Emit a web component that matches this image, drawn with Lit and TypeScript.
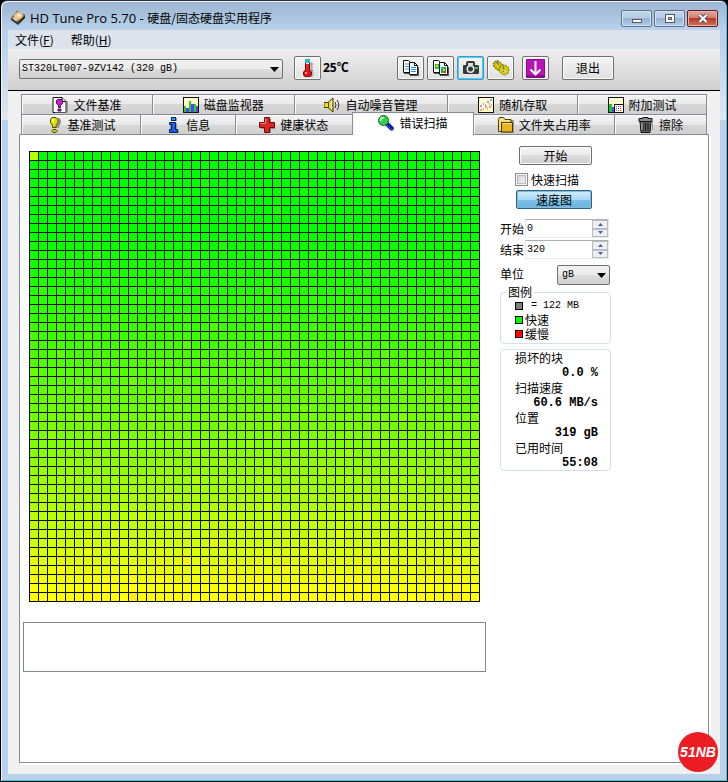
import { LitElement, html, css, svg, TemplateResult } from "lit";
import { customElement, state } from "lit/decorators.js";
import { classMap } from "lit/directives/class-map.js";

const GRID = 50;

// Red channel of a row's colour, as [row, value] knots; green stays at full.
const KNOTS: [number, number][] = [
  [0, 0], [8, 2], [14, 28], [21, 66], [30, 116], [36, 152], [42, 200], [48, 250], [49, 255],
];

function redAt(row: number): number {
  for (let i = 1; i < KNOTS.length; i++) {
    const [r0, v0] = KNOTS[i - 1];
    const [r1, v1] = KNOTS[i];
    if (row <= r1) return v0 + ((v1 - v0) * (row - r0)) / (r1 - r0);
  }
  return 255;
}

function cellColor(index: number): string {
  if (index === 0) return "rgb(180,255,0)";
  const row = Math.floor(index / GRID);
  const jitter = (index * 7919) % 97;
  const extra = jitter < 3 ? 18 : jitter < 20 ? 5 : 0;
  const red = Math.min(255, Math.round(redAt(row) + extra));
  const green = row > 48 && jitter < 4 ? 240 : 255;
  return `rgb(${red},${green},0)`;
}

const CELLS = Array.from({ length: GRID * GRID }, (_, i) => cellColor(i));

const icon = (body: TemplateResult, size = 16) => html`
  <svg class="icon" width=${size} height=${size} viewBox="0 0 ${size} ${size}" aria-hidden="true">${body}</svg>`;

const icons = {
  app: icon(svg`
    <path d="M1 8 L7 1 L15 5 L15 8 L8 15 L1 10Z" fill="#3a3632"/>
    <path d="M1 8 L7 1 L15 5 L8 12Z" fill="#8d7a66"/>
    <ellipse cx="8.500" cy="6" rx="4.500" ry="3.500" fill="#f3c784" transform="rotate(-25 8 6)"/>
    <circle cx="9" cy="5.500" r="1.300" fill="#fff"/>
    <path d="M3 8 L7 11" stroke="#e8dccb" stroke-width="1.500"/>
    <path d="M9 13 L15 7" stroke="#15130f"/>`),
  thermo: icon(svg`
    <path d="M12 3v8l2 2v3l-2 2H8" fill="none" stroke="#999"/>
    <path d="M6 0h5v11l2 2v3l-2 2H6l-2-2v-3l2-2z" fill="#701010"/>
    <rect x="7" y="1" width="3" height="6" fill="#fff"/>
    <rect x="6" y="0" width="5" height="4" fill="#32b4c8"/>
    <rect x="7" y="5" width="3" height="9" fill="#f02020"/>
    <ellipse cx="8.500" cy="14.500" rx="3.500" ry="3" fill="#e81010"/>
    <rect x="6" y="13" width="2" height="2" fill="#ff9a9a"/>
    <path d="M12 5h2M12 8h2M12 11h2" stroke="#777"/>`, 18),
  copyText: icon(svg`
    <path d="M1.500 1.500h5l3 3v9h-8z" fill="#fff" stroke="#111"/>
    <path d="M3 5h5M3 7.500h5M3 10h5" stroke="#2f91ec"/>
    <path d="M7.500 3.500h5l3 3v9h-8z" fill="#fff" stroke="#111"/>
    <path d="M12.500 3.500v3h3" fill="none" stroke="#111"/>
    <path d="M9 8.500h5M9 10.500h5M9 12.500h5" stroke="#2f91ec"/>
    <path d="M2 14.500h5M8 16.500h8.500V8" fill="none" stroke="#555"/>`, 18),
  copyImage: icon(svg`
    <path d="M1.500 1.500h5l3 3v9h-8z" fill="#fff" stroke="#111"/>
    <path d="M3 5h4v5H3z" fill="#16c23a"/><path d="M4 6h2v2H4z" fill="#ffd824"/>
    <path d="M7.500 3.500h5l3 3v9h-8z" fill="#fff" stroke="#111"/>
    <path d="M12.500 3.500v3h3" fill="none" stroke="#111"/>
    <path d="M9 8h5v6H9z" fill="#12b436"/><path d="M9 8h3v2H9z" fill="#29a8e8"/>
    <path d="M11 10h2v2h-2z" fill="#ffca1a"/><path d="M12 12h2v2h-2z" fill="#e52a1b"/>
    <path d="M2 14.500h5M8 16.500h8.500V8" fill="none" stroke="#555"/>`, 18),
  camera: icon(svg`
    <path d="M4 6V4q0-2 2-2h5q2 0 2 2v2h2q2 0 2 1v7q0 1-1 1H2q-1 0-1-1V7q0-1 1-1z" fill="#35383b"/>
    <path d="M6 4h5v2H6z" fill="#dfe6ea"/>
    <circle cx="8.500" cy="10" r="4" fill="#eceff1"/>
    <circle cx="8.500" cy="10" r="2.500" fill="#35383b"/>
    <path d="M13 8h3v2h-3z" fill="#2ecb3d"/>`, 18),
  gears: icon(svg`
    <path d="M3 2l2 1 1-1 2 1 2 2 1 4-2 2-4 0-3-3-1-3z" fill="#c4bd00" stroke="#6e6900" stroke-dasharray="2 1"/>
    <path d="M8 8l2-2 3 0 3 2 1 3-1 3-3 2-3-1-3-3z" fill="#d6cf10" stroke="#6e6900" stroke-dasharray="2 1"/>
    <path d="M5.500 1v6M11.500 7v6" stroke="#777" stroke-width="1.500"/>
    <path d="M4 5l3 3M10 10l4 3" stroke="#fff04a"/>`, 18),
  down: icon(svg`
    <rect x="0" y="0" width="19" height="19" rx="1" fill="#8a0b8a"/>
    <rect x="1" y="1" width="17" height="15" fill="#b814b8"/>
    <path d="M9.500 2v14M4.500 10.500l5 5 5-5" fill="none" stroke="#fff" stroke-width="2"/>`, 19),
  fileBench: icon(svg`
    <path d="M1 .5h9l4 4v11H1z" fill="#fff" stroke="#111"/>
    <path d="M10 .5v4h4" fill="#ddd" stroke="#111"/>
    <path d="M15.500 4v12H3" fill="none" stroke="#999"/>
    <path d="M5.500 2.500h4l1 1v3l-2 2v2h-2v-2l-2-2v-3z" fill="#d116d1" stroke="#50104f"/>
    <path d="M6 12h3v2H6z" fill="#d116d1" stroke="#50104f"/>`),
  monitor: icon(svg`
    <rect x=".5" y=".5" width="15" height="15" fill="#fffcc9" stroke="#111"/>
    <path d="M1 9h2v6H1zM6 4h2v11H6zM11 7h2v8h-2z" fill="#2acb35"/>
    <path d="M3 11h3v4H3zM8 7h3v8H8zM13 9h2v6h-2z" fill="#5547e8"/>`),
  speaker: icon(svg`
    <path d="M0 5.500h4l5-4.500v14l-5-4.500H0z" fill="#f2df15" stroke="#3d3700"/>
    <path d="M4.500 5.500v5" stroke="#3d3700"/><path d="M7.500 4v8" stroke="#fff"/>
    <path d="M11 5q2 3 0 6M13 3q3.500 5 0 10" fill="none" stroke="#333"/>`),
  scatter: icon(svg`
    <rect x=".5" y=".5" width="15" height="15" fill="#fff9cf" stroke="#111"/>
    <path d="M2 9h2M5 7h1M7 8h1M9 5h2M12 3h2M11 7h1" stroke="#3447e8"/>
    <path d="M2 13h2M5 12h1M7 10h2M9 12h1M11 10h2M13 8h1" stroke="#ee3a2a"/>`),
  extra: icon(svg`
    <rect x=".5" y=".5" width="15" height="15" fill="#fff9cf" stroke="#111"/>
    <path d="M1 7h3v8H1z" fill="#18c532"/><path d="M4 10h3v5H4z" fill="#4856e8"/>
    <rect x="6.500" y="7.500" width="9" height="8" fill="#fff" stroke="#111"/>
    <path d="M8 9.500h6M8 11.500h6M8 13.500h6" stroke="#e53a3a" stroke-dasharray="1 1"/>`),
  bulb: icon(svg`
    <path d="M9 1h4l2 2v3l-2 4v1H9z" fill="#999"/>
    <path d="M6 .5h4l2 2v3l-2 3v2H6.500v-2L4.500 5.500v-3z" fill="#e2e000" stroke="#4b4a00"/>
    <path d="M6 2h2v3H6z" fill="#fffd9a"/>
    <path d="M7 12.500h3l1 1v1l-1 1H7l-1-1v-1z" fill="#cfcc00" stroke="#4b4a00"/>`),
  info: icon(svg`
    <path d="M7 1h5v3H7zM5 6h7v7h2v3H5z" fill="#999"/>
    <rect x="6.500" y=".5" width="4" height="3" fill="#22a6f2" stroke="#062a58"/>
    <path d="M4.500 5.500h6v7h2v3h-8v-3h2v-5h-2z" fill="#1660ee" stroke="#06205a"/>`),
  health: icon(svg`
    <path d="M6 2h6v4h4v6h-4v4H6v-4H2V6h4z" fill="#8a8a8a"/>
    <path d="M5.500 .5h5v5h5v5h-5v5h-5v-5h-5v-5h5z" fill="#e02222" stroke="#621010"/>
    <path d="M6.500 6.500v-5M1.500 6.500h5" stroke="#ff8a80"/>`),
  scan: icon(svg`
    <path d="M9 8l7 7" stroke="#999" stroke-width="4"/>
    <path d="M8 8l6.500 6.500" stroke="#0b1a9c" stroke-width="4"/>
    <path d="M8 9l6 6" stroke="#3f59ee"/>
    <circle cx="5.500" cy="5.500" r="5" fill="#35d04a" stroke="#126c22"/>
    <path d="M3 6V3h3" fill="none" stroke="#c8ffcf" stroke-width="1.500"/>`),
  folder: icon(svg`
    <path d="M3 3h13v13H3z" fill="#999"/>
    <path d="M.5 2.500l1-2h4l1.500 2h6v12H.5z" fill="#f7e07a" stroke="#493800"/>
    <path d="M3.500 5.500h11v9.500h-11z" fill="#e9b420" stroke="#493800"/>
    <path d="M4.500 6.500h9" stroke="#ffe894"/>`),
  trash: icon(svg`
    <path d="M1 1.500h4v-1h5v1h4v3H1z" fill="#8c8c8c" stroke="#111"/>
    <path d="M2 4.500h11l-1 11H3z" fill="#5e5e5e" stroke="#111"/>
    <path d="M5 6v8M7.500 6v8M10 6v8" stroke="#161616"/>
    <path d="M4 6v7" stroke="#c9c9c9"/><path d="M14.500 4v9" stroke="#999"/>`),
};

interface Tab { id: string; label: string; grow: number; icon: TemplateResult; }

const BACK_TABS: Tab[] = [
  { id: "file", label: "文件基准", grow: 131, icon: icons.fileBench },
  { id: "monitor", label: "磁盘监视器", grow: 142, icon: icons.monitor },
  { id: "noise", label: "自动噪音管理", grow: 154, icon: icons.speaker },
  { id: "random", label: "随机存取", grow: 130, icon: icons.scatter },
  { id: "extra", label: "附加测试", grow: 129, icon: icons.extra },
];
const FRONT_TABS: Tab[] = [
  { id: "bench", label: "基准测试", grow: 119, icon: icons.bulb },
  { id: "info", label: "信息", grow: 95, icon: icons.info },
  { id: "health", label: "健康状态", grow: 117, icon: icons.health },
  { id: "scan", label: "错误扫描", grow: 122, icon: icons.scan },
  { id: "folder", label: "文件夹占用率", grow: 141, icon: icons.folder },
  { id: "erase", label: "擦除", grow: 92, icon: icons.trash },
];

const base = css`
  * { box-sizing: border-box; }
  button, input, select, textarea { font: inherit; color: inherit; margin: 0; border-radius: 0; }
  .icon { display: block; flex: none; }
`;

@customElement("block-map")
export class BlockMap extends LitElement {
  static styles = css`
    :host { display: block; }
    .map {
      display: inline-grid;
      grid-template-columns: repeat(50, 8px);
      grid-auto-rows: 8px;
      gap: 1px;
      padding: 1px;
      background: #000;
      vertical-align: top;
    }
  `;
  render() {
    return html`<div class="map" role="img" aria-label="速度图">
      ${CELLS.map((c) => html`<i style="background:${c}"></i>`)}
    </div>`;
  }
}

@customElement("scan-controls")
export class ScanControls extends LitElement {
  static styles = [base, css`
    :host { display: flex; flex-direction: column; width: 111px; }
    .push {
      height: 19px; padding: 0; line-height: 16px;
      border: 1px solid #707070; border-radius: 2px;
      background: linear-gradient(#f4f4f4, #ebebeb 50%, #dddddd 50%, #cfcfcf);
      box-shadow: inset 0 0 0 1px #fafafa;
    }
    .start { margin: 0 19px; }
    .check { display: flex; align-items: center; gap: 3px; margin: 6px 0 2px 15px; height: 17px; }
    .check input {
      appearance: none; width: 13px; height: 13px;
      border: 1px solid #8e8f8f; background: linear-gradient(135deg, #cbcfd5, #f6f6f6);
      box-shadow: inset 0 0 0 1px #f4f4f4, inset 0 0 0 2px #b8bcc4;
    }
    .on {
      margin: 0 19px 0 16px; border-color: #2c628b;
      background: linear-gradient(#d2ecfa, #a9daf4 50%, #7cc0ea 50%, #68b3db);
      box-shadow: inset 0 0 0 1px #86b8d4;
    }
    .field { display: flex; align-items: center; height: 19px; gap: 1px; }
    .field label { width: 24px; flex: none; white-space: nowrap; }
    .from { margin-top: 10px; }
    .to { margin-top: 2px; }
    .spin { display: flex; width: 84px; height: 19px; border: 1px solid #e3e9ef; border-top-color: #abadb3; background: #fff; }
    .spin input { width: 64px; border: 0; padding: 0 1px; background: none; font: 10px/16px "Liberation Mono", monospace; outline: 0; }
    .arrows { display: flex; flex-direction: column; width: 16px; margin-left: auto; }
    .arrows button {
      flex: 1; min-height: 0; padding: 0; border: 1px solid #b9bcc4; background: #efefef;
      display: flex; align-items: center; justify-content: center;
    }
    .arrows svg { display: block; }
    .unit { margin: 5px 1px 1px 0; height: 20px; justify-content: space-between; }
    .pick { position: relative; width: 53px; height: 20px; }
    .pick select {
      appearance: none; width: 100%; height: 100%; padding: 0 4px; border: 1px solid #707070; border-radius: 2px;
      background: linear-gradient(#f2f2f2, #ebebeb 50%, #dddddd 50%, #cfcfcf);
      font: 10px "Liberation Mono", monospace;
    }
    .pick svg { position: absolute; right: 4px; top: 9px; pointer-events: none; }
    fieldset { margin: 0; padding: 0; border: 1px solid #d5dfe5; border-radius: 4px; min-width: 0; }
    .legend { height: 59px; }
    legend { margin-left: 5px; padding: 0 2px; line-height: 14px; }
    ul { list-style: none; margin: 0; padding: 0 0 0 14px; }
    li { display: flex; align-items: center; gap: 2px; height: 14px; line-height: 14px; }
    .mono { font: 10px/14px "Liberation Mono", monospace; white-space: pre; }
    .key { width: 8px; height: 8px; border: 1px solid #000; flex: none; }
    .grey { background: #808080; }
    .green { background: #00ff00; }
    .red { background: #ff0000; }
    .stats { margin: 5px 0 0; padding: 0 12px 0 14px; border: 1px solid #d5dfe5; border-radius: 4px; line-height: 15px; }
    .stats dt { height: 15px; }
    .stats dd { height: 15px; margin: 0; text-align: right; font: bold 12px/17px "Liberation Mono", monospace; white-space: nowrap; }
  `];

  private spinner(id: string, label: string, value: string, cls: string) {
    return html`<div class="field ${cls}">
      <label for=${id}>${label}</label>
      <span class="spin">
        <input id=${id} type="text" .value=${value}>
        <span class="arrows">
          <button aria-label="增加"><svg width="5" height="3" viewBox="0 0 5 3"><path d="M0 3L2.500 0L5 3z" fill="#3f5fb5"/></svg></button>
          <button aria-label="减少"><svg width="5" height="3" viewBox="0 0 5 3"><path d="M0 0h5L2.500 3z" fill="#3f5fb5"/></svg></button>
        </span>
      </span>
    </div>`;
  }

  render() {
    return html`
      <button class="push start">开始</button>
      <label class="check"><input type="checkbox">快速扫描</label>
      <button class="push on" aria-pressed="true">速度图</button>
      ${this.spinner("from", "开始", "0", "from")}
      ${this.spinner("to", "结束", "320", "to")}
      <div class="field unit">
        <label for="unit">单位</label>
        <span class="pick">
          <select id="unit"><option>gB</option></select>
          <svg width="9" height="5" viewBox="0 0 9 5"><path d="M0 0h9L4.500 5z"/></svg>
        </span>
      </div>
      <fieldset class="legend">
        <legend>图例</legend>
        <ul>
          <li><span class="key grey"></span><span class="mono"> = 122 MB</span></li>
          <li><span class="key green"></span>快速</li>
          <li><span class="key red"></span>缓慢</li>
        </ul>
      </fieldset>
      <dl class="stats">
        <dt>损坏的块</dt><dd>0.0 %</dd>
        <dt>扫描速度</dt><dd>60.6 MB/s</dd>
        <dt>位置</dt><dd>319 gB</dd>
        <dt>已用时间</dt><dd>55:08</dd>
      </dl>`;
  }
}

@customElement("app-root")
export class AppRoot extends LitElement {
  @state() private current = "scan";

  static styles = [base, css`
    :host {
      display: block; background: #000; color: #000;
      font: 12px/16px "Noto Sans CJK SC", sans-serif;
    }
    .window {
      position: relative; display: flex; flex-direction: column; min-height: 100vh;
      padding: 0 7px 7px; border: 1px solid #000;
      border-color: #2b2f38 #000 #000 #000;
      border-radius: 7px 7px 0 0;
      background:
        linear-gradient(#9ab5d3, #b9d1ea 29px, #b9d1ea 40px, #dce8f4 119px, #b9d1ea 119px);
      box-shadow: inset 1px 1px 0 #eef5fb, inset -1px -1px 0 #2fd0ea;
    }
    header { display: flex; align-items: center; height: 29px; padding: 5px 2px 0 2px; gap: 4px; }
    h1 { flex: 1; margin: 0; font: 13px/18px "Open Sans", sans-serif; white-space: nowrap; }
    .cjk { font: 12px/18px "Noto Sans CJK SC", sans-serif; }
    .caption { display: flex; gap: 2px; align-self: flex-start; margin-top: 4px; }
    .caption button {
      display: flex; align-items: center; justify-content: center;
      width: 31px; height: 17px; padding: 0;
      border: 1px solid #59708e; border-radius: 2px;
      background: linear-gradient(#c3d6ea, #b4cae2 50%, #98b3d0 50%, #b1cae4);
      box-shadow: inset 0 0 0 1px #d5e4f3;
    }
    .caption .close {
      border-color: #5b1f1c;
      background: linear-gradient(#e3a79b, #d2786a 50%, #b93a27 50%, #d0715a);
      box-shadow: inset 0 0 0 1px #e8b4aa;
    }
    .client { flex: 1; display: flex; flex-direction: column; background: #f0f0f0; }
    nav { display: flex; gap: 17px; height: 19px; padding: 0 7px; background: #dce3ec; }
    nav button { padding: 0; border: 0; background: none; line-height: 19px; }
    .toolbar {
      display: flex; align-items: center; height: 42px; padding: 0 11px 3px;
      background: linear-gradient(#efefef, #cfcfcf); border-bottom: 1px solid #000;
    }
    .drive { position: relative; width: 264px; height: 20px; margin-right: 11px; }
    .drive select {
      appearance: none; width: 100%; height: 100%; padding: 0 2px; border: 1px solid #707070; border-radius: 2px;
      background: linear-gradient(#f2f2f2, #ebebeb 50%, #dddddd 50%, #cfcfcf);
      font: 10px "Liberation Mono", monospace;
    }
    .drive svg { position: absolute; right: 4px; top: 9px; pointer-events: none; }
    .tool {
      display: flex; align-items: center; justify-content: center; width: 27px; height: 24px; padding: 0;
      border: 1px solid #707070; border-radius: 2px; background: linear-gradient(#f4f4f4, #e0e0e0);
      box-shadow: inset 0 0 0 1px #fafafa;
    }
    .tool.hot { border-color: #2f9fd0; box-shadow: inset 0 0 0 1px #52c8f0; }
    .temp { width: 74px; margin-left: 2px; font: bold 12px/16px "Open Sans", "Noto Sans CJK SC", sans-serif; }
    .group { display: flex; gap: 3px; margin-right: 8px; }
    .exit { width: 52px; margin-left: 13px; }
    .tabs { padding: 3px 13px 0; }
    .row { display: flex; height: 20px; }
    .tab {
      display: flex; align-items: center; justify-content: center; gap: 5px; min-width: 0; padding: 0;
      border: 1px solid #898c95; border-width: 1px 1px 0 0; white-space: nowrap;
      background: linear-gradient(#f3f3f3, #e8e8e8 50%, #d8d8d8 50%, #cfcfcf);
      box-shadow: inset 1px 1px 0 #fafafa;
    }
    .tab:first-child { border-left-width: 1px; }
    .tab.sel {
      position: relative; z-index: 1; height: 23px; margin-top: -2px; padding-bottom: 3px;
      background: #fff; border-left-width: 1px; margin-left: -1px;
    }
    .panel {
      flex: 1; display: flex; align-items: flex-start; gap: 14px;
      margin: 0 11px 11px; padding: 0 3px 20px;
      background: #fff; border: 1px solid #898c95; box-shadow: 1px 1px 0 #fff, 2px 2px 0 #fff;
    }
    .scan { display: flex; flex-direction: column; width: 463px; padding-top: 16px; gap: 20px; }
    .scan block-map { margin-left: 6px; }
    textarea { display: block; width: 100%; height: 50px; border: 1px solid #828790; background: #fff; resize: none; outline: 0; }
    scan-controls { margin-top: 11px; }
    .badge {
      position: absolute; right: 9px; bottom: 9px; width: 40px; height: 40px; border-radius: 50%;
      background: #ed1c24; color: #fff; text-align: center;
      font: italic bold 14px/40px "Liberation Sans", sans-serif;
    }
  `];

  private tab(t: Tab) {
    const sel = t.id === this.current;
    return html`<button role="tab" class=${classMap({ tab: true, sel })} aria-selected=${sel}
      style="flex:${t.grow} 1 0" @click=${() => (this.current = t.id)}>${t.icon}${t.label}</button>`;
  }

  render() {
    return html`
      <div class="window">
        <header>
          ${icons.app}
          <h1>HD Tune Pro 5.70 - <span class="cjk">硬盘/固态硬盘实用程序</span></h1>
          <div class="caption">
            <button aria-label="最小化"><svg width="12" height="11"><rect x="1.500" y="6.500" width="9" height="3" fill="#fff" stroke="#535666"/></svg></button>
            <button aria-label="最大化"><svg width="12" height="11"><rect x="1.500" y="1.500" width="9" height="8" fill="#fff" stroke="#535666"/><rect x="4.500" y="4.500" width="3" height="2" fill="#b5cae2" stroke="#535666"/></svg></button>
            <button class="close" aria-label="关闭"><svg width="12" height="11"><path d="M2.500 2l7 7M9.500 2l-7 7" stroke="#535666" stroke-width="4"/><path d="M2.500 2l7 7M9.500 2l-7 7" stroke="#fff" stroke-width="2"/></svg></button>
          </div>
        </header>
        <div class="client">
          <nav>
            <button>文件(<u>F</u>)</button>
            <button>帮助(<u>H</u>)</button>
          </nav>
          <div class="toolbar">
            <span class="drive">
              <select aria-label="驱动器"><option>ST320LT007-9ZV142 (320 gB)</option></select>
              <svg width="9" height="5" viewBox="0 0 9 5"><path d="M0 0h9L4.500 5z"/></svg>
            </span>
            <button class="tool" aria-label="温度">${icons.thermo}</button>
            <span class="temp">25℃</span>
            <div class="group">
              <button class="tool" aria-label="复制文本">${icons.copyText}</button>
              <button class="tool" aria-label="复制图像">${icons.copyImage}</button>
              <button class="tool hot" aria-label="截图">${icons.camera}</button>
              <button class="tool" aria-label="选项">${icons.gears}</button>
            </div>
            <button class="tool" aria-label="保存">${icons.down}</button>
            <button class="tool exit">退出</button>
          </div>
          <div class="tabs" role="tablist">
            <div class="row">${BACK_TABS.map((t) => this.tab(t))}</div>
            <div class="row">${FRONT_TABS.map((t) => this.tab(t))}</div>
          </div>
          <main class="panel" role="tabpanel">
            <div class="scan">
              <block-map></block-map>
              <textarea aria-label="日志" readonly></textarea>
            </div>
            <scan-controls></scan-controls>
          </main>
        </div>
        <div class="badge">51NB</div>
      </div>`;
  }
}
